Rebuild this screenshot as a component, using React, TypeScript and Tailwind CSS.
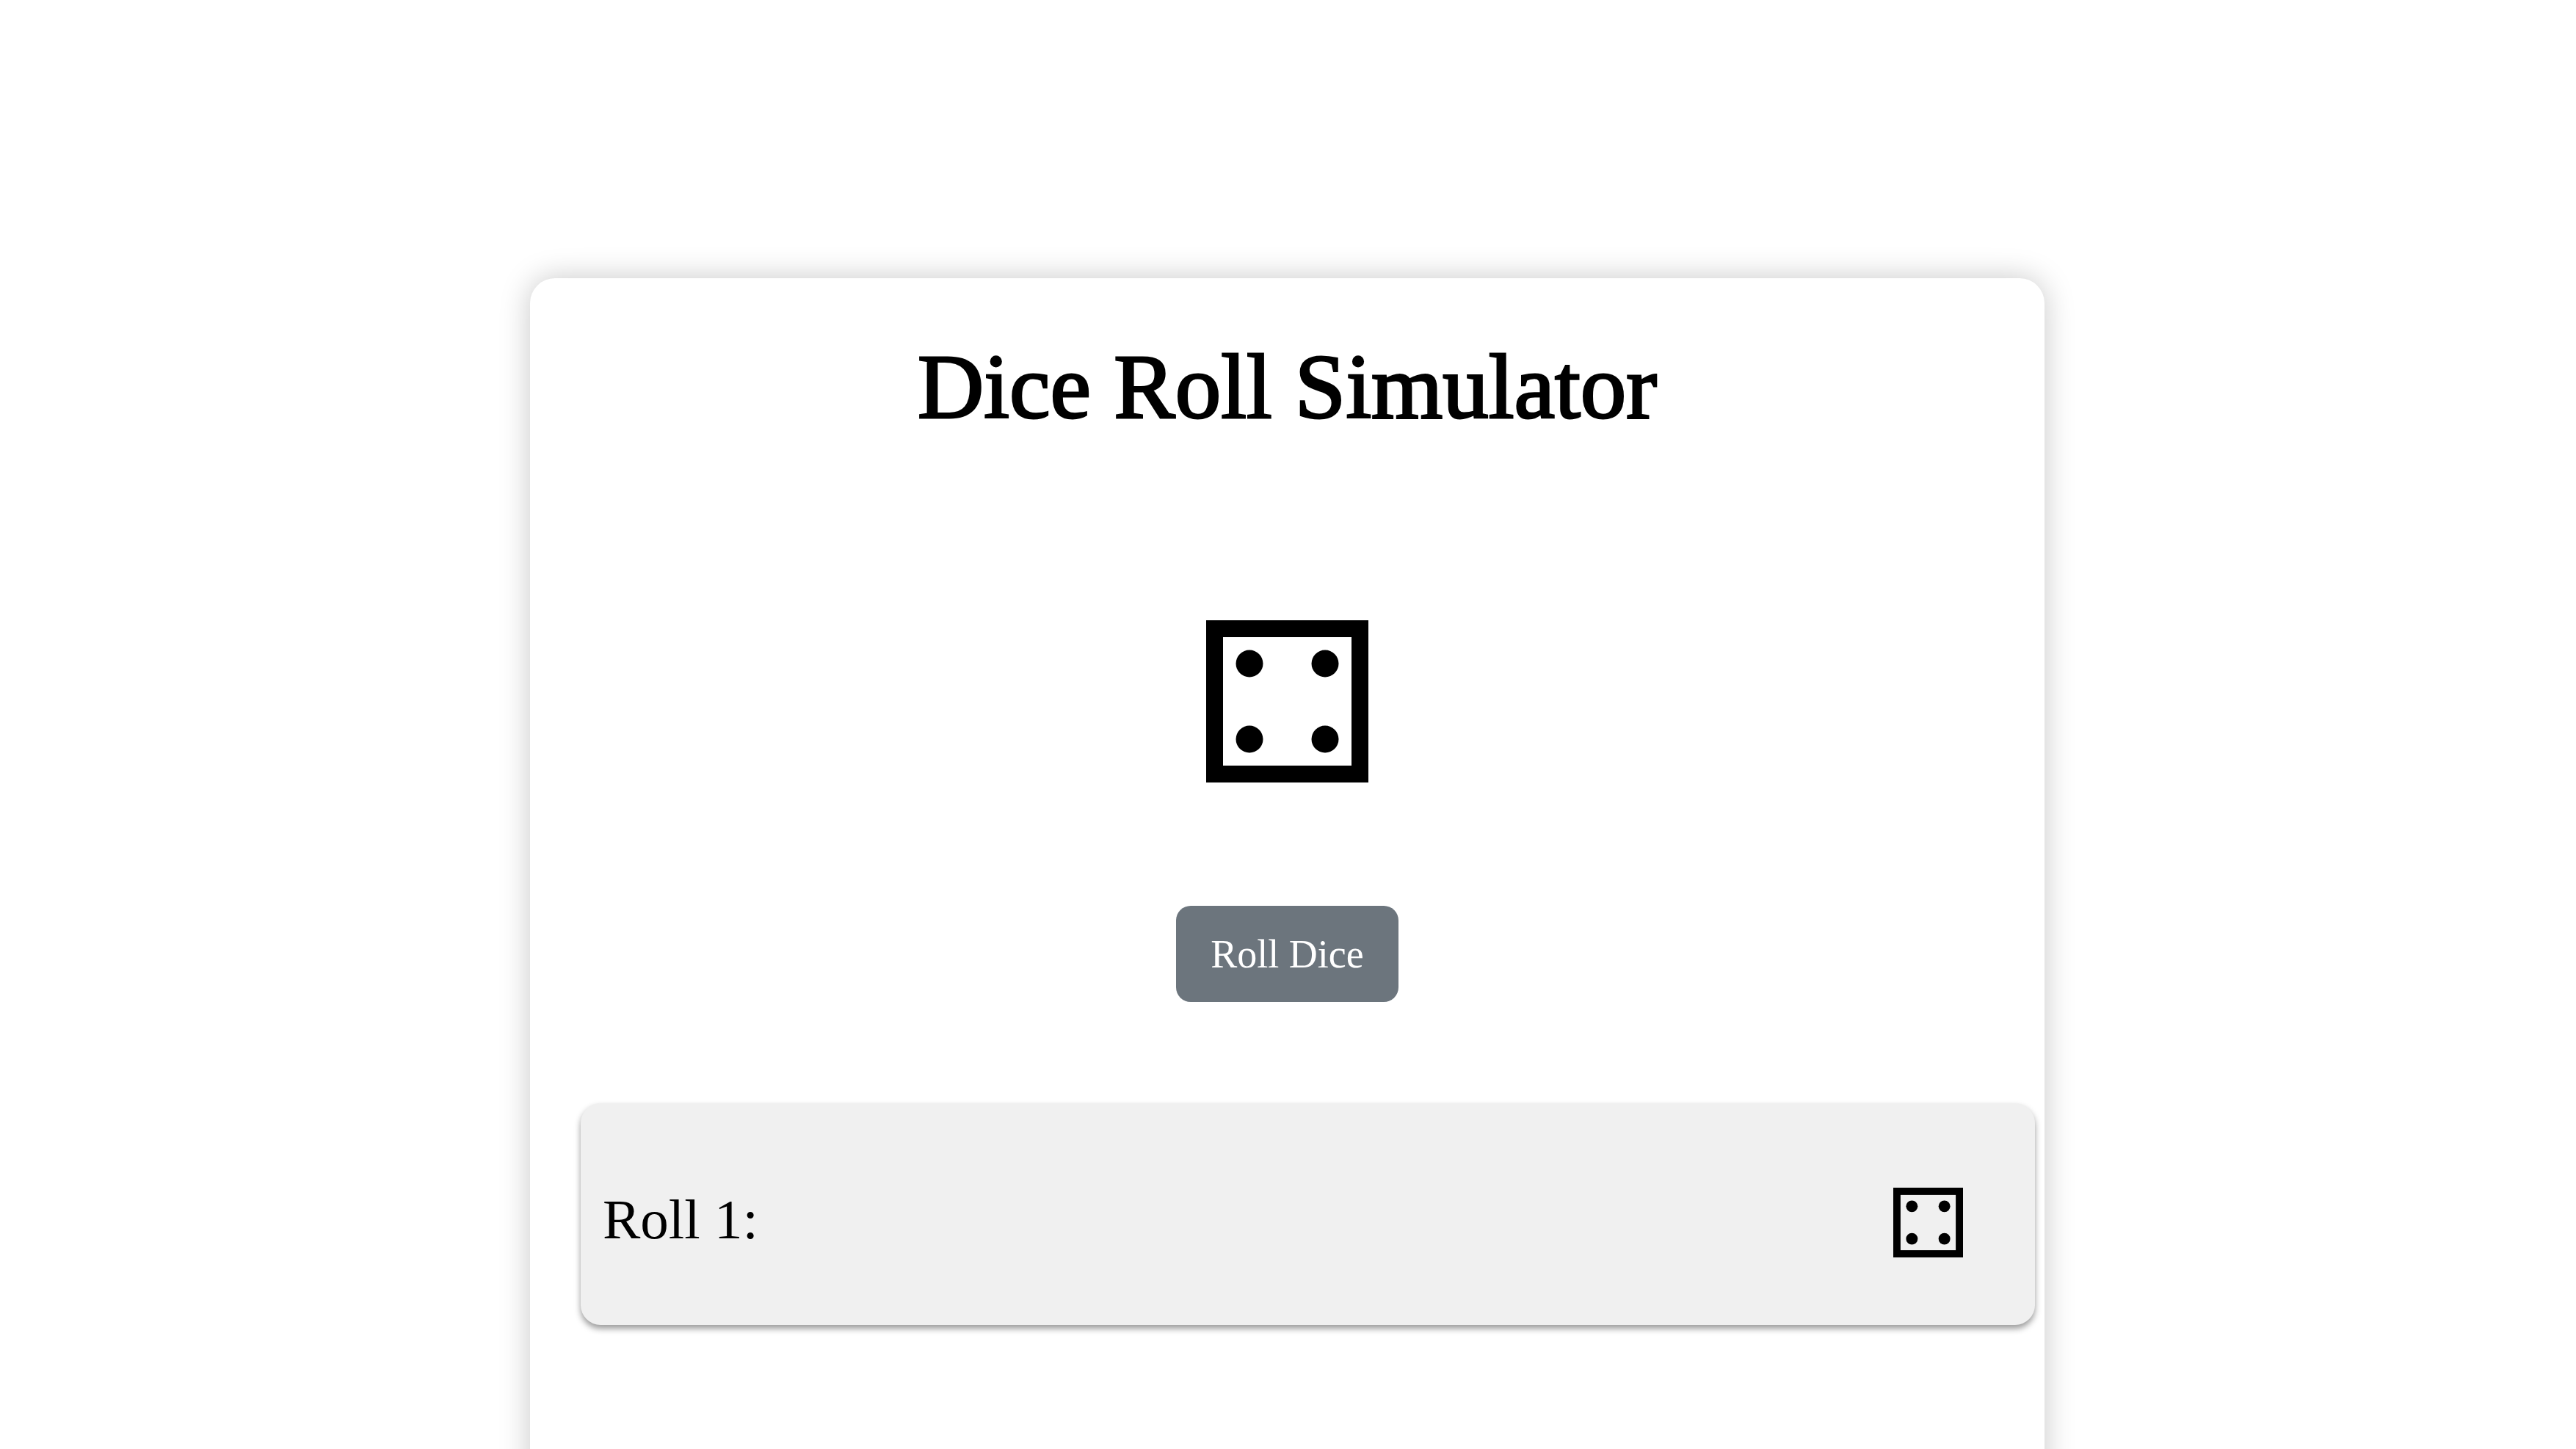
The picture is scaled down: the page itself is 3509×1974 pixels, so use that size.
import { useState } from "react";

const TL = [59, 59];
const TR = [162, 59];
const ML = [59, 110];
const MR = [162, 110];
const BL = [59, 162];
const BR = [162, 162];
const MID = [110, 110];

const PIPS: Record<number, number[][]> = {
  1: [MID],
  2: [TL, BR],
  3: [TL, MID, BR],
  4: [TL, TR, BL, BR],
  5: [TL, TR, MID, BL, BR],
  6: [TL, TR, ML, MR, BL, BR],
};

function Die({ value, className }: { value: number; className: string }) {
  return (
    <svg viewBox="0 0 221 221" className={className} role="img" aria-label={`Die showing ${value}`}>
      <rect x="11.5" y="11.5" width="198" height="198" fill="none" stroke="#000" strokeWidth="23" />
      {PIPS[value].map(([x, y]) => (
        <circle key={`${x}-${y}`} cx={x} cy={y} r="18.5" fill="#000" />
      ))}
    </svg>
  );
}

export default function App() {
  const [rolls, setRolls] = useState<number[]>([4]);
  const roll = () => setRolls((list) => [...list, 1 + Math.floor(Math.random() * 6)]);

  return (
    <div className="h-screen overflow-hidden bg-white pt-[379px] pr-[34px] pl-8 font-['Liberation_Serif',serif] text-black">
      <main className="mx-auto flex min-h-screen w-full max-w-[2063px] flex-col items-center rounded-[34px] bg-white pt-[76px] shadow-[0_0_42px_rgba(0,0,0,0.22)]">
        <h1 className="text-[125px] leading-[144px] [-webkit-text-stroke:3px_black]">Dice Roll Simulator</h1>
        <Die value={rolls[rolls.length - 1]} className="mt-[246px] size-[221px]" />
        <button
          type="button"
          onClick={roll}
          className="mt-[168px] cursor-pointer rounded-[20px] bg-[#6c757d] px-[47px] pt-9 pb-[35px] text-[54px] leading-[60px] text-white"
        >
          Roll Dice
        </button>
        <ul className="mt-[138px] flex flex-col gap-8 self-stretch pr-[13px] pl-[69px]">
          {rolls.map((value, i) => (
            <li
              key={i}
              className="flex h-[302px] items-center justify-between rounded-[27px] bg-[#f0f0f0] pt-[22px] pr-[98px] pl-[30px] shadow-[0_5px_9px_rgba(0,0,0,0.4)]"
            >
              <span className="pb-2 text-[77px] leading-[88px]">Roll {i + 1}:</span>
              <Die value={value} className="size-[95px]" />
            </li>
          ))}
        </ul>
      </main>
    </div>
  );
}
